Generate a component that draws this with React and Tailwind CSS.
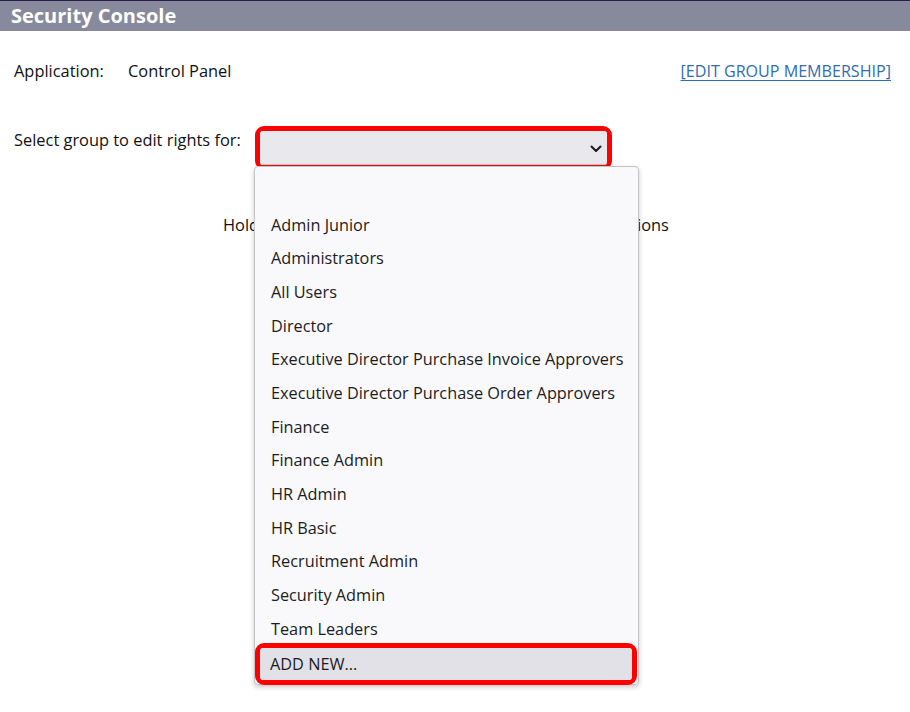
import React from "react";

const groups = [
  "",
  "Admin Junior",
  "Administrators",
  "All Users",
  "Director",
  "Executive Director Purchase Invoice Approvers",
  "Executive Director Purchase Order Approvers",
  "Finance",
  "Finance Admin",
  "HR Admin",
  "HR Basic",
  "Recruitment Admin",
  "Security Admin",
  "Team Leaders",
];

export default function App() {
  return (
    <div
      className="w-[910px] h-[712px] bg-white text-[#111] overflow-hidden"
      style={{ fontFamily: '"Open Sans", "Noto Sans", sans-serif' }}
    >
      {/* Header */}
      <div className="h-[31px] bg-[#878a9c] border-t-[1.5px] border-[#2b1c4d] flex items-center pl-[11px]">
        <span className="text-white font-bold text-[20px] leading-none">Security Console</span>
      </div>

      {/* Application row */}
      <div className="mt-[28px] flex items-center pl-[14px] pr-[19px] text-[16.4px] leading-[24px]">
        <span className="w-[114px]">Application:</span>
        <span>Control Panel</span>
        <a
          href="#"
          className="ml-auto text-[16.1px] text-[#2f6cb3] underline underline-offset-[3px] decoration-[1px]"
        >
          [EDIT GROUP MEMBERSHIP]
        </a>
      </div>

      {/* Select row */}
      <div className="mt-[43px] flex items-start pl-[14px] text-[16.4px] leading-[24px]">
        <span className="w-[241px] mt-[2px]">Select group to edit rights for:</span>
        <div className="relative">
          <div className="w-[357px] h-[44px] border-[5px] border-[#ff0000] rounded-[9px]">
            <div className="h-full bg-[#e9e9ed] rounded-[3px] shadow-[inset_0_-1px_0_#c9c9d1] flex items-center justify-end pr-[5px]">
              <svg width="12" height="8" viewBox="0 0 12 8" className="mt-[2px]">
                <path d="M1.5 1.5 L6 6 L10.5 1.5" fill="none" stroke="#1b1b1b" strokeWidth="2" strokeLinecap="round" strokeLinejoin="round" />
              </svg>
            </div>
          </div>

          {/* Dropdown list */}
          <div className="absolute z-10 top-[40px] -left-px w-[385px] bg-[#f9f9fb] border border-[#c4c4c8] rounded-[4px] shadow-[0_2px_5px_rgba(0,0,0,0.22)] pt-[7px]">
            {groups.map((g, i) => (
              <div key={i} className="h-[33.7px] flex items-center pl-[16px] text-[16.3px] text-[#1c1c1c] whitespace-nowrap">
                {g}
              </div>
            ))}
            <div className="mt-[-3px] mb-[-1px] mr-[1px] h-[42px] border-[5px] border-[#ff0000] rounded-[9px]">
              <div className="h-full bg-[#e1e1e7] rounded-[3px] flex items-center pl-[10px] text-[16.3px] text-[#1c1c1c]">
                ADD NEW...
              </div>
            </div>
          </div>
        </div>
      </div>

      {/* Hint text behind the list */}
      <div className="mt-[43px] pl-[223px] text-[16.4px] leading-[24px] whitespace-nowrap">
        Hold down CTRL to select or deselect multiple permissions
      </div>
    </div>
  );
}
